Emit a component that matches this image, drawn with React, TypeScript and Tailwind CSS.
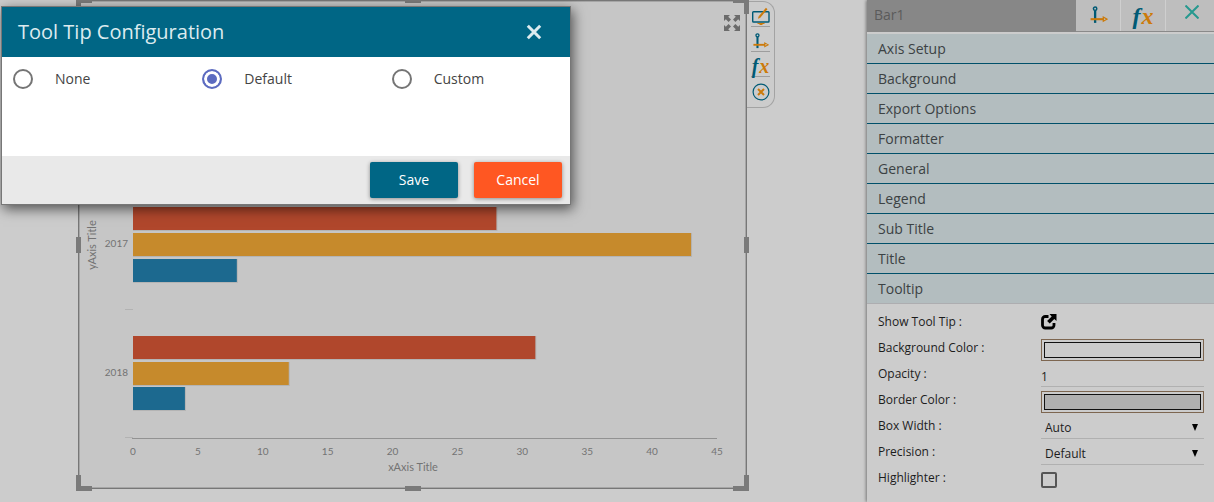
import { useState, type ReactNode } from 'react';

const BLUE = '#005a75';
const ORANGE = '#cc7a0a';

function MonitorIcon() {
  return (
    <svg className="shrink-0" width="20" height="18" viewBox="0 0 20 18" fill="none" aria-hidden="true">
      <rect x="1.700" y="4.700" width="16.300" height="10.300" rx="0.800" stroke={BLUE} strokeWidth="1.400" />
      <path d="M8.500 10 15.700 1.500" stroke={ORANGE} strokeWidth="2" />
      <path d="m7 11.800.6-2.500 1.800 1.500Z" fill={ORANGE} />
      <path d="M6.500 16.500h7M8.500 17.500h3" stroke={ORANGE} strokeWidth="1.200" />
    </svg>
  );
}

function AxisIcon({ size }: { size: number }) {
  return (
    <svg className="shrink-0" width={size} height={size} viewBox="0 0 18 18" fill="none" aria-hidden="true">
      <path d="M5.800 4v12" stroke={BLUE} strokeWidth="2.200" />
      <circle cx="5.800" cy="2.500" r="1.600" stroke={BLUE} strokeWidth="1.400" />
      <path d="M1.500 12.500h12.500" stroke={ORANGE} strokeWidth="2" />
      <path d="m13.500 10.500 3.600 2-3.600 2Z" stroke={ORANGE} strokeWidth="1.100" />
    </svg>
  );
}

function FxIcon({ className }: { className: string }) {
  return (
    <span aria-hidden="true" className={`font-[family-name:'Liberation_Serif',serif] font-bold italic text-[#005a75] ${className}`}>
      f<span className="pl-px text-[#cc7a0a]">x</span>
    </span>
  );
}

function CircleCloseIcon() {
  return (
    <svg className="shrink-0" width="18" height="18" viewBox="0 0 18 18" fill="none" aria-hidden="true">
      <circle cx="9" cy="9" r="7.900" stroke={BLUE} strokeWidth="1.200" />
      <path d="m6 6 6 6M12 6l-6 6" stroke={ORANGE} strokeWidth="2" />
    </svg>
  );
}

function ExpandIcon() {
  return (
    <svg width="16" height="16" viewBox="0 0 16 16" fill="#6b6b6b" aria-hidden="true">
      <path d="M0 0h6L4.200 1.800 7 4.600 4.600 7 1.800 4.200 0 6Z" />
      <path d="M16 0v6l-1.800-1.800L11.400 7 9 4.600l2.800-2.800L10 0Z" />
      <path d="M0 16v-6l1.800 1.800L4.600 9 7 11.400l-2.800 2.800L6 16Z" />
      <path d="M16 16h-6l1.800-1.800L9 11.400 11.400 9l2.800 2.800L16 10Z" />
    </svg>
  );
}

function ExternalIcon() {
  return (
    <svg width="16" height="16" viewBox="0 0 16 16" fill="none" aria-hidden="true">
      <path d="M7.500 2.500H4.300A2.800 2.800 0 0 0 1.500 5.300v5.900A2.800 2.800 0 0 0 4.300 14h5.900a2.800 2.800 0 0 0 2.800-2.800V9" stroke="#000" strokeWidth="2.800" />
      <path d="M8.500 0H15.500v7l-2.200-2.100-4.600 4.700-2.600-2.600 4.600-4.600Z" fill="#000" />
    </svg>
  );
}

const series = ['#b0472c', '#c68a2c', '#1c698f'];
const groups = [
  { year: '2017', mid: 244, values: [28, 43, 8], tops: [207, 233, 259] },
  { year: '2018', mid: 373, values: [31, 12, 4], tops: [336, 362, 387] },
];
const ticks = [0, 5, 10, 15, 20, 25, 30, 35, 40, 45];
const UNIT = 584 / 45;
const ORIGIN = 55;

function BarChart() {
  return (
    <svg viewBox="0 0 669 489" className="block w-full font-[Lato,sans-serif]" role="img" aria-label="Bar1">
      {groups.map((g) => (
        <g key={g.year}>
          <text x="50" y={g.mid + 3} textAnchor="end" fontSize="10" fill="#737373">{g.year}</text>
          {g.values.map((v, i) => (
            <g key={i}>
              <rect x={ORIGIN} y={g.tops[i]} width={v * UNIT + 1} height="24" fill="#b4b4b4" />
              <rect x={ORIGIN} y={g.tops[i]} width={v * UNIT} height="23" fill={series[i]} />
            </g>
          ))}
        </g>
      ))}
      <path d="M47 309.500h8M47 437.500h8" stroke="#b2b2b2" />
      <path d="M54 438.500h585" stroke="#929292" />
      {ticks.map((t) => (
        <text key={t} x={ORIGIN + t * UNIT} y="455" textAnchor="middle" fontSize="10" fill="#737373">{t}</text>
      ))}
      <text x="335" y="471" textAnchor="middle" fontSize="11" fill="#737373">xAxis Title</text>
      <text transform="translate(18 245) rotate(-90)" textAnchor="middle" fontSize="11" fill="#737373">yAxis Title</text>
    </svg>
  );
}

const handles = [
  '-left-[2px] -top-[2px] h-4 w-4 border-l-5 border-t-5',
  '-right-[2px] -top-[2px] h-4 w-4 border-r-5 border-t-5',
  '-left-[2px] -bottom-[2px] h-4 w-4 border-l-5 border-b-5',
  '-right-[2px] -bottom-[2px] h-4 w-4 border-r-5 border-b-5',
  '-left-[2px] top-1/2 -mt-2 h-4 border-l-5',
  '-right-[2px] top-1/2 -mt-2 h-4 border-l-5',
  '-top-[2px] left-1/2 -ml-2 w-4 border-t-5',
  '-bottom-[2px] left-1/2 -ml-2 w-4 border-t-5',
];

function Canvas() {
  return (
    <main className="flex min-w-0 flex-1 items-start bg-[#cccccc] pr-[92px] pl-[78px]">
      <section className="relative min-w-0 flex-1 bg-[#c6c6c6] outline-1 -outline-offset-1 outline-[#777]">
        <div className="outline-1 -outline-offset-2 outline-[#a6a6a6]">
          <BarChart />
        </div>
        <button aria-label="Expand" className="absolute top-[15px] right-[7px]"><ExpandIcon /></button>
        {handles.map((h) => (
          <span key={h} className={`absolute border-[#7a7a7a] ${h}`} />
        ))}
      </section>
      <nav className="mt-px w-7 rounded-r-xl border border-l-0 border-[#a3a3a3] pr-1 pl-1">
        <ToolButton label="Edit"><MonitorIcon /></ToolButton>
        <ToolButton label="Axis"><AxisIcon size={17} /></ToolButton>
        <ToolButton label="Formula"><FxIcon className="text-xl leading-4" /></ToolButton>
        <ToolButton label="Remove"><CircleCloseIcon /></ToolButton>
      </nav>
    </main>
  );
}

function ToolButton({ label, children }: { label: string; children: ReactNode }) {
  return (
    <button aria-label={label} className="flex h-[25px] w-full items-center justify-center border-b border-[#9d9d9d] pt-1 last:h-[30px] last:border-0 last:pt-0">
      {children}
    </button>
  );
}

const sections = ['Axis Setup', 'Background', 'Export Options', 'Formatter', 'General', 'Legend', 'Sub Title', 'Title'];

function Field({ id, label, children }: { id: string; label: string; children: ReactNode }) {
  return (
    <div className="flex h-[26px] pr-[10px] pb-px pl-[11px]">
      <label htmlFor={id} className="flex-1 leading-6">{label}</label>
      <div className="flex w-[163px] items-end">{children}</div>
    </div>
  );
}

function ColorField({ id, label, color }: { id: string; label: string; color: string }) {
  return (
    <Field id={id} label={label}>
      <button id={id} className="flex h-[22px] w-full border border-[#7d6650] p-[2px]">
        <span className={`h-full w-full border border-[#111] ${color}`} />
      </button>
    </Field>
  );
}

function SelectField({ id, label, options }: { id: string; label: string; options: string[] }) {
  return (
    <Field id={id} label={label}>
      <div className="relative w-full">
        <select id={id} className="block h-[23px] w-full appearance-none border-b border-[#b0b0b0] bg-transparent pt-[2px] pl-1">
          {options.map((o) => <option key={o}>{o}</option>)}
        </select>
        <svg className="pointer-events-none absolute top-2 right-[6px]" width="6" height="7" viewBox="0 0 6 7" aria-hidden="true">
          <path d="M0 0h6L3 7Z" fill="#000" />
        </svg>
      </div>
    </Field>
  );
}

function Properties() {
  return (
    <aside className="w-[347px] shrink-0 bg-[#cccccc] text-xs text-[#1c1c1c] shadow-[-1px_0_3px_#777]">
      <header className="flex h-8">
        <input aria-label="Widget name" defaultValue="Bar1" className="min-w-0 flex-1 bg-[#878787] px-[7px] pb-[2px] text-sm text-[#5b5b5b] outline-none" />
        <div className="flex w-[138px] divide-x divide-[#cfcfcf] border-b border-[#8a8a8a] bg-[#bebebe]">
          <button aria-label="Axis" className="flex flex-1 items-center justify-center"><AxisIcon size={19} /></button>
          <button aria-label="Formula" className="flex flex-1 items-center justify-center"><FxIcon className="text-2xl leading-6" /></button>
          <button aria-label="Close" className="flex flex-1 items-center justify-center pb-2 pl-1">
            <svg width="14" height="14" viewBox="0 0 14 14" aria-hidden="true">
              <path d="m.5.5 13 13M13.500.5l-13 13" stroke="#26998f" strokeWidth="2" />
            </svg>
          </button>
        </div>
      </header>
      <div className="mt-[2px] text-sm text-[#3c4244]">
        {sections.map((s) => (
          <button key={s} className="block h-[30px] w-full border-b border-[#00506a] bg-[#b3bdbf] pl-[11px] text-left">{s}</button>
        ))}
        <button className="block h-[30px] w-full border-b border-[#adadb0] bg-[#b3bdbf] pl-[11px] text-left">Tooltip</button>
      </div>
      <form className="pt-[6px]" onSubmit={(e) => e.preventDefault()}>
        <Field id="show" label="Show Tool Tip :">
          <button id="show" className="mb-[5px]"><ExternalIcon /></button>
        </Field>
        <ColorField id="background" label="Background Color :" color="bg-[#cccccc]" />
        <Field id="opacity" label="Opacity :">
          <input id="opacity" defaultValue="1" className="h-[22px] w-full border-b border-[#b0b0b0] bg-transparent pt-[2px] outline-none" />
        </Field>
        <ColorField id="border" label="Border Color :" color="bg-[#b0b0b0]" />
        <SelectField id="width" label="Box Width :" options={['Auto', 'Custom']} />
        <SelectField id="precision" label="Precision :" options={['Default', '0', '1', '2']} />
        <Field id="highlighter" label="Highlighter :">
          <input id="highlighter" type="checkbox" className="mb-[3px] h-4 w-4 appearance-none rounded-xs border-2 border-[#555] checked:bg-[#555]" />
        </Field>
      </form>
    </aside>
  );
}

function TooltipDialog() {
  const [mode, setMode] = useState('Default');
  return (
    <div role="dialog" aria-labelledby="dialog-title" className="absolute top-[6px] left-px w-[570px] border border-[#777] bg-white shadow-[2px_4px_12px_rgba(0,0,0,0.6)]">
      <header className="flex h-[50px] items-center justify-between bg-[#006685] pr-7 pl-4 text-[#dcebef]">
        <h1 id="dialog-title" className="text-xl">Tool Tip Configuration</h1>
        <button aria-label="Close">
          <svg width="16" height="16" viewBox="0 0 16 16" aria-hidden="true">
            <path d="m1.800 1.800 12.400 12.400M14.200 1.800 1.800 14.200" stroke="currentColor" strokeWidth="3" />
          </svg>
        </button>
      </header>
      <div className="grid h-[99px] grid-cols-3 items-start pt-3 text-sm text-[#444]">
        {['None', 'Default', 'Custom'].map((name) => (
          <label key={name} className="flex items-center gap-[22px] pl-[11px]">
            <input
              type="radio"
              name="mode"
              checked={mode === name}
              onChange={() => setMode(name)}
              className="h-5 w-5 appearance-none rounded-full border-2 border-[#757575] checked:border-[#5c6bc0] checked:bg-[#5c6bc0] checked:shadow-[inset_0_0_0_3px_#fff]"
            />
            {name}
          </label>
        ))}
      </div>
      <footer className="flex h-12 items-center justify-end gap-4 bg-[#e9e9e9] pr-2 text-sm font-medium text-white">
        <button className="h-9 w-[88px] rounded-xs bg-[#006685] shadow-[0_1px_4px_rgba(0,0,0,0.4)]">Save</button>
        <button className="h-9 w-[88px] rounded-xs bg-[#ff5722] shadow-[0_1px_4px_rgba(0,0,0,0.4)]">Cancel</button>
      </footer>
    </div>
  );
}

export default function App() {
  return (
    <div className="relative flex min-h-screen overflow-hidden bg-[#cccccc] font-['Open_Sans',sans-serif]">
      <Canvas />
      <Properties />
      <TooltipDialog />
    </div>
  );
}
